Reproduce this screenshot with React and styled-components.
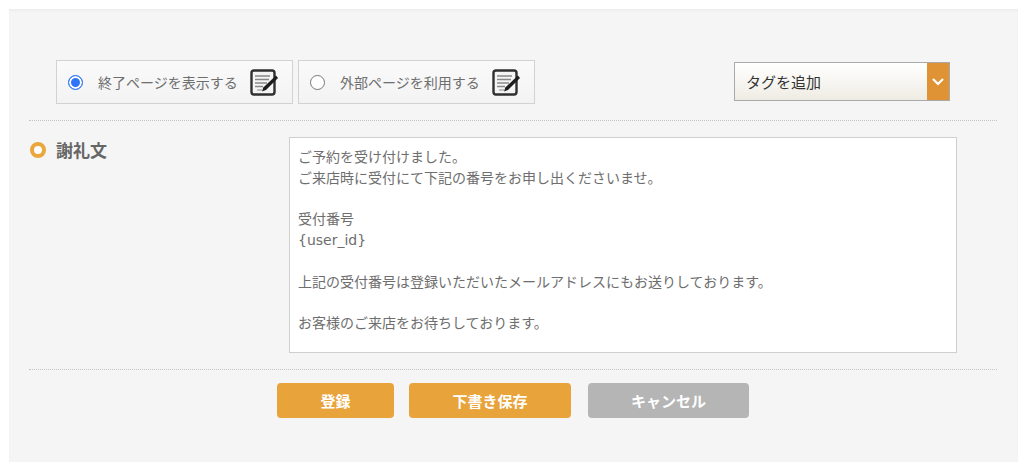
import React from "react";
import styled, { createGlobalStyle } from "styled-components";

const GlobalStyle = createGlobalStyle`
  html, body {
    margin: 0;
    padding: 0;
    background: #fff;
  }
  body {
    font-family: "Noto Sans CJK JP", "Noto Sans", sans-serif;
  }
`;

const Panel = styled.div`
  box-sizing: border-box;
  width: 1009px;
  height: 453px;
  margin: 9px 0 0 9px;
  padding: 51px 21px 0 20px;
  background: #f5f5f5;
  box-shadow: inset 0 2px 2px rgba(0, 0, 0, 0.03);
`;

const TopRow = styled.div`
  display: flex;
  align-items: flex-start;
  height: 61px;
  box-sizing: border-box;
  padding-left: 27px;
  border-bottom: 1px dotted #c4c4c4;
`;

const Option = styled.label`
  box-sizing: border-box;
  display: flex;
  align-items: center;
  width: 237px;
  height: 44px;
  margin-right: 5px;
  padding-left: 11px;
  border: 1px solid #d2d2d2;
  background: linear-gradient(#fafafa, #f3f3f3);
  color: #6e6e6e;
  font-size: 14px;
`;

const Radio = styled.span`
  box-sizing: border-box;
  flex: none;
  width: 15px;
  height: 15px;
  margin-right: 15px;
  border-radius: 50%;
  background: ${(p) => (p.$checked ? "#2f74f6" : "#fff")};
  border: 1px solid ${(p) => (p.$checked ? "#2f74f6" : "#777")};
  box-shadow: ${(p) => (p.$checked ? "inset 0 0 0 2px #fff" : "none")};
`;

const OptionText = styled.span`
  width: 152px;
  white-space: nowrap;
`;

const TagSelect = styled.div`
  box-sizing: border-box;
  display: flex;
  width: 216px;
  height: 39px;
  margin: 2px 47px 0 auto;
  border: 1px solid #a9a9a9;
  background: linear-gradient(#fff, #efece4);
  color: #333;
  font-size: 15px;
`;

const TagLabel = styled.span`
  flex: 1;
  padding-left: 11px;
  line-height: 37px;
`;

const TagArrow = styled.span`
  display: flex;
  align-items: center;
  justify-content: center;
  width: 22px;
  background: #e09335;
`;

const BodyRow = styled.div`
  display: flex;
  align-items: flex-start;
  height: 249px;
  padding-top: 16px;
  box-sizing: border-box;
  border-bottom: 1px dotted #c4c4c4;
`;

const Heading = styled.h2`
  display: flex;
  align-items: center;
  width: 260px;
  margin: 0;
  color: #666;
  font-size: 17px;
  font-weight: 700;
  line-height: 26px;
`;

const Bullet = styled.span`
  box-sizing: border-box;
  flex: none;
  width: 16px;
  height: 16px;
  margin: 0 10px 0 1px;
  border: 4px solid #eba63c;
  border-radius: 50%;
  background: #fff;
`;

const Message = styled.textarea`
  box-sizing: border-box;
  display: block;
  width: 668px;
  height: 216px;
  margin: 0;
  padding: 9px 8px;
  border: 1px solid #cfcfcf;
  border-radius: 0;
  outline: none;
  resize: none;
  overflow: hidden;
  background: #fff;
  color: #6e6e6e;
  font-family: "DejaVu Sans", "Noto Sans CJK JP", sans-serif;
  font-size: 14px;
  line-height: 20.8px;
`;

const Buttons = styled.div`
  display: flex;
  padding: 13px 0 0 248px;
`;

const Button = styled.button`
  box-sizing: border-box;
  width: ${(p) => p.$width}px;
  height: 35px;
  margin-right: ${(p) => p.$gap}px;
  padding: 0;
  border: none;
  border-radius: 4px;
  background: ${(p) => (p.$muted ? "#b5b5b5" : "#e9a33b")};
  color: #fff;
  font-family: inherit;
  font-size: 15px;
  font-weight: 700;
`;

const EditIcon = () => (
  <svg width="29" height="27" viewBox="0 0 29 27" fill="none">
    <rect x="1.5" y="1.5" width="23" height="24" rx="2.5" fill="#f4f4f4" stroke="#2f2f2f" strokeWidth="2.4" />
    <path d="M5 7h15M5 10.5h14M5 14h12M5 17.5h8" stroke="#888" strokeWidth="1.3" />
    <path d="M26 6.5l2 2.5-12 12-4 1.5 1.3-4z" fill="#1d1d1d" />
    <path d="M7 21h5" stroke="#999" strokeWidth="1.2" />
  </svg>
);

const message = `ご予約を受け付けました。
ご来店時に受付にて下記の番号をお申し出くださいませ。

受付番号
{user_id}

上記の受付番号は登録いただいたメールアドレスにもお送りしております。

お客様のご来店をお待ちしております。`;

const App = () => (
  <>
    <GlobalStyle />
    <Panel>
      <TopRow>
        <Option>
          <Radio $checked />
          <OptionText>終了ページを表示する</OptionText>
          <EditIcon />
        </Option>
        <Option>
          <Radio />
          <OptionText>外部ページを利用する</OptionText>
          <EditIcon />
        </Option>
        <TagSelect>
          <TagLabel>タグを追加</TagLabel>
          <TagArrow>
            <svg width="14" height="9" viewBox="0 0 14 9" fill="none">
              <path d="M2 2l5 5 5-5" stroke="#fff" strokeWidth="2.2" />
            </svg>
          </TagArrow>
        </TagSelect>
      </TopRow>
      <BodyRow>
        <Heading>
          <Bullet />
          謝礼文
        </Heading>
        <Message readOnly defaultValue={message} />
      </BodyRow>
      <Buttons>
        <Button $width={117} $gap={15}>登録</Button>
        <Button $width={162} $gap={17}>下書き保存</Button>
        <Button $width={161} $gap={0} $muted>キャンセル</Button>
      </Buttons>
    </Panel>
  </>
);

export default App;
